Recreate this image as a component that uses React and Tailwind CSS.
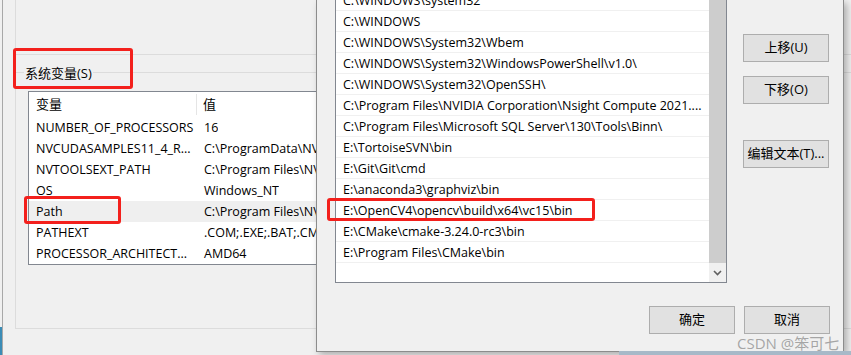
import React from 'react'

const VARS = [
  ['NUMBER_OF_PROCESSORS', '16'],
  ['NVCUDASAMPLES11_4_R...', 'C:\\ProgramData\\NV'],
  ['NVTOOLSEXT_PATH', 'C:\\Program Files\\NV'],
  ['OS', 'Windows_NT'],
  ['Path', 'C:\\Program Files\\NV'],
  ['PATHEXT', '.COM;.EXE;.BAT;.CM'],
  ['PROCESSOR_ARCHITECT...', 'AMD64'],
]

const PATHS = [
  'C:\\WINDOWS\\system32',
  'C:\\WINDOWS',
  'C:\\WINDOWS\\System32\\Wbem',
  'C:\\WINDOWS\\System32\\WindowsPowerShell\\v1.0\\',
  'C:\\WINDOWS\\System32\\OpenSSH\\',
  'C:\\Program Files\\NVIDIA Corporation\\Nsight Compute 2021....',
  'C:\\Program Files\\Microsoft SQL Server\\130\\Tools\\Binn\\',
  'E:\\TortoiseSVN\\bin',
  'E:\\Git\\Git\\cmd',
  'E:\\anaconda3\\graphviz\\bin',
  'E:\\OpenCV4\\opencv\\build\\x64\\vc15\\bin',
  'E:\\CMake\\cmake-3.24.0-rc3\\bin',
  'E:\\Program Files\\CMake\\bin',
]

function Btn({ children, className = '' }) {
  return (
    <div className={`w-[86px] h-[28px] flex items-center justify-center bg-[#e1e1e1] border border-[#adadad] text-[13px] text-black ${className}`}>
      {children}
    </div>
  )
}

export default function App() {
  return (
    <div className="relative w-[851px] h-[355px] overflow-hidden bg-[#f0f0f0] flex font-['Open_Sans','Noto_Sans_CJK_SC',sans-serif] text-[12.5px] text-black">

      {/* left window edge */}
      <div className="w-[3px] h-full flex flex-col border-r border-[#a8a8a8]">
        <div className="flex-1" />
        <div className="h-[28px] bg-[#3b8cb6]" />
      </div>

      {/* environment variables window */}
      <div className="flex-1 pl-[12px] flex flex-col">
        <div className="h-[55px] border-l border-b border-[#dcdcdc]" />

        <div className="relative mt-[17px] h-[257px] border border-r-0 border-[#dcdcdc]">
          <span className="absolute -top-[10px] left-[8px] px-[1px] bg-[#f0f0f0] leading-[20px] text-[13px]">系统变量(S)</span>

          <div className="ml-[12px] mt-[18px] w-[289px] overflow-hidden bg-white border border-r-0 border-[#828790]">
            <div className="flex h-[25px] items-center text-[13px]">
              <div className="w-[168px] shrink-0 h-[21px] pl-[7px] flex items-center border-r border-[#e5e5e5]">变量</div>
              <div className="pl-[6px]">值</div>
            </div>
            {VARS.map(([k, v]) => (
              <div key={k} className={`flex h-[21px] items-center pt-[2px] whitespace-nowrap ${k === 'Path' ? 'bg-[#efefef]' : ''}`}>
                <div className="w-[169px] shrink-0 pl-[7px]">{k}</div>
                <div className="pl-[6px] overflow-hidden">{v}</div>
              </div>
            ))}
          </div>
        </div>
      </div>

      {/* edit environment variable dialog */}
      <div className="absolute left-[316px] top-0 w-[528px] h-[352px] bg-[#f0f0f0] border-l border-r border-b border-[#8c8c8c] shadow-[3px_3px_7px_rgba(0,0,0,0.28)] flex flex-col">
        <div className="flex">
          <div className="ml-[18px] mt-[-11px] w-[392px] h-[294px] bg-white border border-[#828790] flex">
            <div className="flex-1">
              {PATHS.map((p) => (
                <div key={p} className="h-[21px] flex items-center pt-[2px] pl-[7px] border-b border-[#f0f0f0] whitespace-nowrap">
                  {p}
                </div>
              ))}
            </div>
            <div className="w-[17px] flex flex-col">
              <div className="h-[273px] bg-[#cdcdcd]" />
              <div className="flex-1 bg-[#f0f0f0] flex items-center justify-center">
                <svg width="9" height="6" viewBox="0 0 9 6">
                  <path d="M1 1 L4.5 4.5 L8 1" fill="none" stroke="#606060" strokeWidth="1.6" />
                </svg>
              </div>
            </div>
          </div>

          <div className="ml-[16px] pt-[34px] flex flex-col">
            <Btn>上移(U)</Btn>
            <Btn className="mt-[14px]">下移(O)</Btn>
            <Btn className="mt-[36px]">编辑文本(T)...</Btn>
          </div>
        </div>

        <div className="flex justify-end gap-[9px] pr-[13px] mt-[23px]">
          <Btn>确定</Btn>
          <Btn>取消</Btn>
        </div>
      </div>

      {/* desktop strip under the dialog */}
      <div className="absolute left-[619px] right-0 bottom-0 h-[4px] bg-[#a7b9c8]" />

      {/* annotation boxes */}
      <div className="absolute left-[13px] top-[48px] w-[120px] h-[41px] border-[3px] border-[#f3201c] rounded-[3px]" />
      <div className="absolute left-[24px] top-[196px] w-[97px] h-[28px] border-[3px] border-[#f3201c] rounded-[3px]" />
      <div className="absolute left-[327px] top-[198px] w-[268px] h-[23px] border-[3px] border-[#f3201c] rounded-[3px]" />

      {/* watermark */}
      <div className="absolute left-[737px] top-[333px] text-[15px] leading-[20px] text-[rgba(140,140,140,0.75)] whitespace-nowrap">
        CSDN @笨可七
      </div>
    </div>
  )
}
